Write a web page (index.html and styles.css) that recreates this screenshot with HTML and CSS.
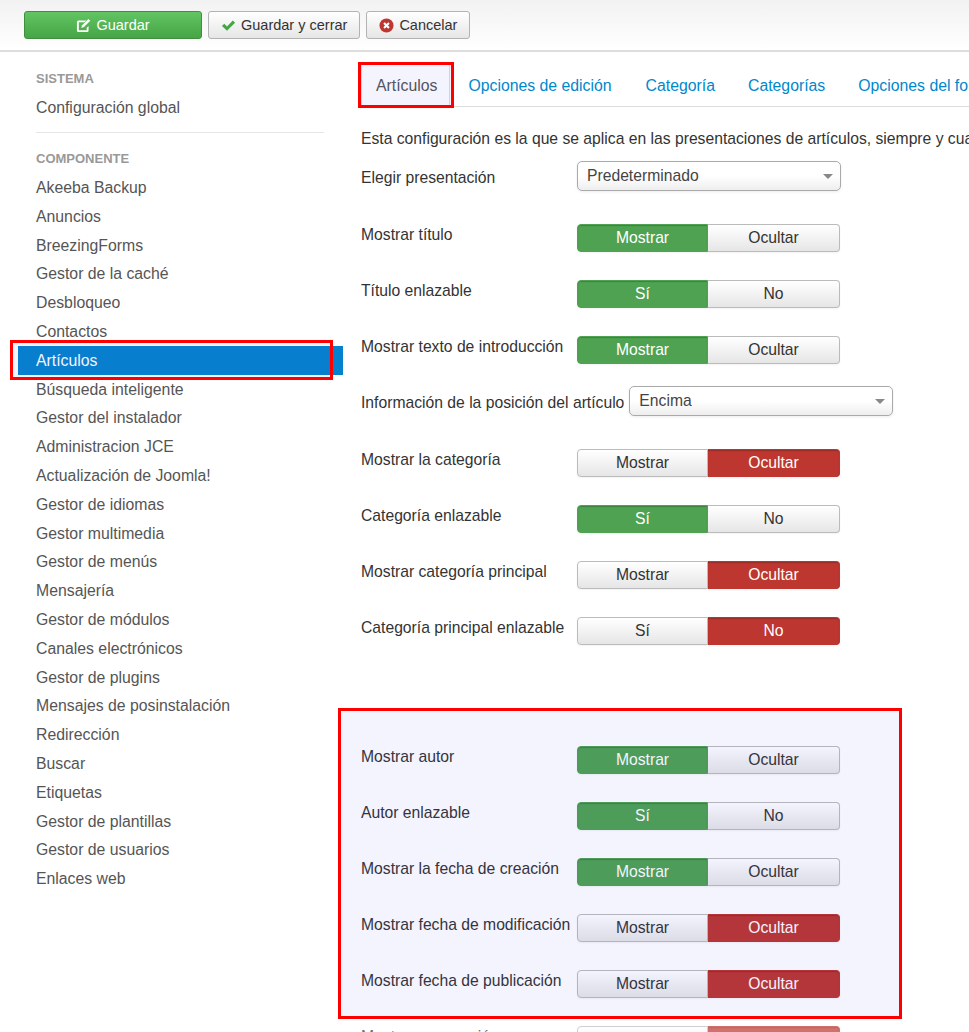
FILE: index.html
```html
<!DOCTYPE html>
<html lang="es">
<head>
  <meta charset="UTF-8">
  <title>Configuración global - Artículos</title>
  <link rel="stylesheet" href="styles.css">
</head>
<body>
  <div class="toolbar">
    <button class="btn btn-save">
      <svg class="icon" viewBox="0 0 16 16"><path d="M11 2.6H2.6A1.6 1.6 0 0 0 1 4.2v9.2A1.6 1.6 0 0 0 2.6 15h9.2a1.6 1.6 0 0 0 1.6-1.6V8.4l-2 2v2.6H3V4.6h6z" fill="#fff"/><path d="M13.2 1l2 2-6.7 6.7-2.9.9.9-2.9z" fill="#fff"/></svg>
      Guardar
    </button>
    <button class="btn">
      <svg class="icon" viewBox="0 0 16 16"><path d="M1 8.6l2.5-2.5 2.9 2.9L12.6 2.6 15 5l-8.6 8.6z" fill="#46a546"/></svg>
      Guardar y cerrar
    </button>
    <button class="btn">
      <svg class="icon" viewBox="0 0 16 16"><circle cx="8" cy="8" r="7.5" fill="#bd362f"/><path d="M4.6 6.2l1.6-1.6L8 6.4l1.8-1.8 1.6 1.6L9.6 8l1.8 1.8-1.6 1.6L8 9.6l-1.8 1.8-1.6-1.6L6.4 8z" fill="#fff"/></svg>
      Cancelar
    </button>
  </div>

  <div class="page">
    <div class="sidebar">
      <div class="nav-header">Sistema</div>
      <a class="nav-item">Configuración global</a>
      <div class="divider"></div>
      <div class="nav-header">Componente</div>
      <a class="nav-item">Akeeba Backup</a>
      <a class="nav-item">Anuncios</a>
      <a class="nav-item">BreezingForms</a>
      <a class="nav-item">Gestor de la caché</a>
      <a class="nav-item">Desbloqueo</a>
      <a class="nav-item">Contactos</a>
      <a class="nav-item active">Artículos</a>
      <a class="nav-item">Búsqueda inteligente</a>
      <a class="nav-item">Gestor del instalador</a>
      <a class="nav-item">Administracion JCE</a>
      <a class="nav-item">Actualización de Joomla!</a>
      <a class="nav-item">Gestor de idiomas</a>
      <a class="nav-item">Gestor multimedia</a>
      <a class="nav-item">Gestor de menús</a>
      <a class="nav-item">Mensajería</a>
      <a class="nav-item">Gestor de módulos</a>
      <a class="nav-item">Canales electrónicos</a>
      <a class="nav-item">Gestor de plugins</a>
      <a class="nav-item">Mensajes de posinstalación</a>
      <a class="nav-item">Redirección</a>
      <a class="nav-item">Buscar</a>
      <a class="nav-item">Etiquetas</a>
      <a class="nav-item">Gestor de plantillas</a>
      <a class="nav-item">Gestor de usuarios</a>
      <a class="nav-item">Enlaces web</a>
    </div>

    <div class="content">
      <div class="tabs">
        <a class="tab active">Artículos</a>
        <a class="tab">Opciones de edición</a>
        <a class="tab">Categoría</a>
        <a class="tab">Categorías</a>
        <a class="tab">Opciones del formulario</a>
      </div>

      <p class="intro">Esta configuración es la que se aplica en las presentaciones de artículos, siempre y cuando no se indique otra cosa.</p>

      <div class="row select-row">
        <label>Elegir presentación</label>
        <div class="select">Predeterminado</div>
      </div>
      <div class="row">
        <label>Mostrar título</label>
        <div class="switch"><span class="on">Mostrar</span><span>Ocultar</span></div>
      </div>
      <div class="row">
        <label>Título enlazable</label>
        <div class="switch"><span class="on">Sí</span><span>No</span></div>
      </div>
      <div class="row">
        <label>Mostrar texto de introducción</label>
        <div class="switch"><span class="on">Mostrar</span><span>Ocultar</span></div>
      </div>
      <div class="row select-row">
        <label>Información de la posición del artículo</label>
        <div class="select">Encima</div>
      </div>
      <div class="row">
        <label>Mostrar la categoría</label>
        <div class="switch"><span>Mostrar</span><span class="off">Ocultar</span></div>
      </div>
      <div class="row">
        <label>Categoría enlazable</label>
        <div class="switch"><span class="on">Sí</span><span>No</span></div>
      </div>
      <div class="row">
        <label>Mostrar categoría principal</label>
        <div class="switch"><span>Mostrar</span><span class="off">Ocultar</span></div>
      </div>
      <div class="row">
        <label>Categoría principal enlazable</label>
        <div class="switch"><span>Sí</span><span class="off">No</span></div>
      </div>

      <div class="group">
        <div class="row">
          <label>Mostrar autor</label>
          <div class="switch"><span class="on">Mostrar</span><span>Ocultar</span></div>
        </div>
        <div class="row">
          <label>Autor enlazable</label>
          <div class="switch"><span class="on">Sí</span><span>No</span></div>
        </div>
        <div class="row">
          <label>Mostrar la fecha de creación</label>
          <div class="switch"><span class="on">Mostrar</span><span>Ocultar</span></div>
        </div>
        <div class="row">
          <label>Mostrar fecha de modificación</label>
          <div class="switch"><span>Mostrar</span><span class="off">Ocultar</span></div>
        </div>
        <div class="row">
          <label>Mostrar fecha de publicación</label>
          <div class="switch"><span>Mostrar</span><span class="off">Ocultar</span></div>
        </div>
        <div class="row faded">
          <label>Mostrar navegación</label>
          <div class="switch"><span>Mostrar</span><span class="off">Ocultar</span></div>
        </div>
      </div>
    </div>
  </div>

  <!-- highlight boxes drawn over the screenshot -->
  <div class="mark mark-tab"></div>
  <div class="mark mark-nav"></div>
  <div class="mark mark-group"></div>
</body>
</html>
```

FILE: styles.css
```css
html, body {
  height: 100%;
  overflow: hidden;
}

body {
  margin: 0;
  font-family: "Liberation Sans", Arial, sans-serif;
  font-size: 15.7px;
  color: #333;
  background: #fff;
}

.toolbar {
  display: flex;
  gap: 6px;
  height: 39px;
  padding: 11px 24px 0;
  background: linear-gradient(#f2f2f2, #fff);
  border-bottom: 2px solid #ddd;
}

.btn {
  display: flex;
  align-items: center;
  justify-content: center;
  gap: 5px;
  height: 28px;
  padding: 0 12px;
  font: inherit;
  font-size: 14.5px;
  color: #333;
  background: linear-gradient(#fff, #e6e6e6);
  border: 1px solid #b3b3b3;
  border-radius: 3px;
}

.btn-save {
  width: 178px;
  color: #fff;
  background: linear-gradient(#62c462, #46a546);
  border-color: #3f8f3f;
}

.icon {
  width: 15px;
  height: 15px;
}

.page {
  display: flex;
}

.sidebar {
  flex: none;
  width: 325px;
  margin-left: 18px;
  padding-top: 18px;
}

.nav-header {
  padding-left: 18px;
  margin-bottom: 4.6px;
  font-size: 13px;
  font-weight: bold;
  line-height: 18px;
  text-transform: uppercase;
  color: #999;
}

.nav-item {
  display: block;
  padding: 2px 0 0 18px;
  font-size: 15.8px;
  line-height: 26.8px;
  color: #555;
}

.nav-item.active {
  color: #fff;
  background: #0582ce;
}

.divider {
  height: 1px;
  margin: 10.6px 19px 17.4px 18px;
  background: #e5e5e5;
}

.content {
  flex: none;
  width: 800px;
  margin-left: 18px;
}

.tabs {
  display: flex;
  height: 43px;
  margin-top: 11px;
  white-space: nowrap;
  border-bottom: 1px solid #ddd;
}

.tab {
  padding: 0 15px;
  margin-right: 3px;
  font-size: 15.8px;
  line-height: 46px;
  color: #0088cc;
}

.tab:nth-child(2) {
  margin-right: 4px;
}

.tab.active {
  height: 44px;
  padding: 0 12px 0 14px;
  box-sizing: border-box;
  line-height: 44px;
  color: #555;
  border: 1px solid #ddd;
  border-bottom-color: #fff;
  border-radius: 4px 4px 0 0;
}

.intro {
  margin: 22px 0 12px;
  line-height: 20px;
  white-space: nowrap;
}

.row {
  display: flex;
  align-items: flex-start;
  height: 34px;
  margin-bottom: 22px;
}

.row.select-row {
  height: 35px;
}

.row.faded {
  opacity: .7;
}

.row label {
  flex: none;
  min-width: 216px;
  padding-right: 5px;
  box-sizing: border-box;
  line-height: 34px;
}

.switch {
  display: flex;
  width: 263px;
  height: 28px;
  margin-top: 6px;
  border-radius: 4px;
  box-shadow: 0 1px 2px rgba(0, 0, 0, .05);
}

.switch span {
  box-sizing: border-box;
  text-align: center;
  line-height: 26px;
  border: 1px solid #bbb;
  background: linear-gradient(#fff, #e6e6e6);
}

.switch span:first-child {
  flex: none;
  width: 131px;
  border-radius: 4px 0 0 4px;
}

.switch span:last-child {
  flex: 1;
  border-left: 0;
  border-radius: 0 4px 4px 0;
}

.switch span.on {
  color: #fff;
  background: #4fa251;
  border-color: #4fa251;
  box-shadow: inset 0 1px 1px rgba(0, 0, 0, .2);
}

.switch span.off {
  color: #fff;
  background: #bd362f;
  border-color: #bd362f;
  box-shadow: inset 0 1px 1px rgba(0, 0, 0, .2);
}

.select {
  position: relative;
  width: 264px;
  height: 30px;
  padding-left: 9px;
  box-sizing: border-box;
  line-height: 27px;
  color: #444;
  background: linear-gradient(#fff 50%, #eee);
  border: 1px solid #aaa;
  border-radius: 5px;
  box-shadow: 0 1px 3px rgba(0, 0, 0, .08);
}

.select::after {
  content: "";
  position: absolute;
  top: 12px;
  right: 7px;
  border: 5px solid transparent;
  border-top: 5px solid #888;
  border-bottom: 0;
}

.group {
  margin-top: 95px;
}

.mark {
  position: absolute;
  box-sizing: border-box;
  border: 3px solid #f00;
  background: rgba(60, 60, 240, .06);
}

.mark-tab {
  left: 358px;
  top: 62px;
  width: 96px;
  height: 46px;
}

.mark-nav {
  left: 10px;
  top: 340px;
  width: 323px;
  height: 40px;
}

.mark-group {
  left: 338px;
  top: 708px;
  width: 564px;
  height: 311px;
}
```
